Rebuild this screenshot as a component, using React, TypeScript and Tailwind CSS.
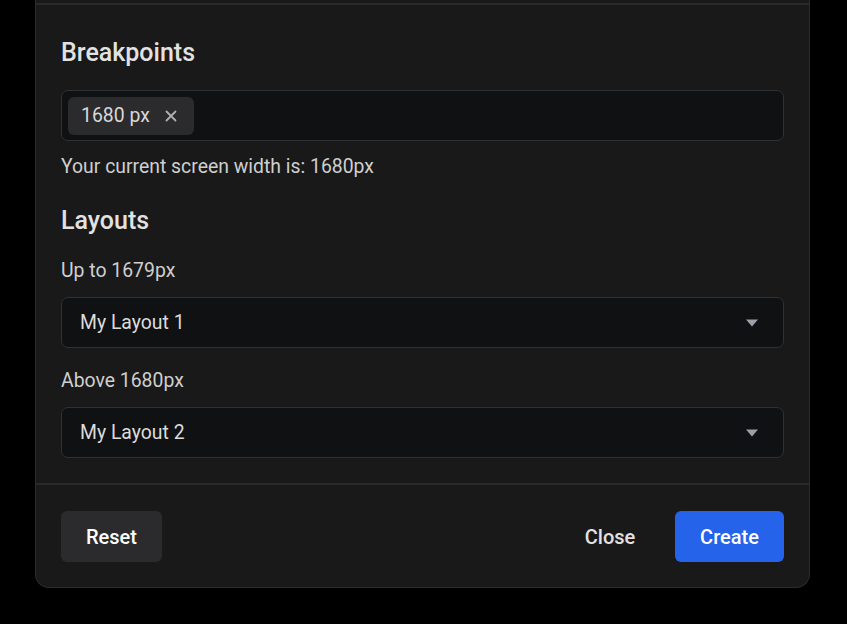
import React from 'react';

const Caret = () => (
  <svg width="14" height="8" viewBox="0 0 14 8" className="shrink-0">
    <path d="M1 0.5h12L7 7.5z" fill="#9ca0a8" />
  </svg>
);

const SelectBox = ({ value }: { value: string }) => (
  <div className="flex items-center justify-between h-[51px] rounded-[7px] border border-[#2f3133] bg-[#0f1113] pl-[18px] pr-[24px]">
    <span className="text-[19.4px] text-[#dcdcdc]">{value}</span>
    <Caret />
  </div>
);

const App = () => {
  return (
    <div className="min-h-[624px] w-full bg-black font-['Roboto',sans-serif]">
      <div className="mx-[35px] w-[775px] rounded-b-[14px] border-x border-b border-[#2c2c2c] bg-[#191919]">
        {/* header of the dialog, cut off at the top */}
        <div className="h-[5px] border-b-2 border-[#2a2a2a]" />

        <div className="px-[25px] pt-[32px] pb-[25px]">
          <h2 className="text-[25px] leading-[32px] font-medium text-[#e2e2e2]">Breakpoints</h2>

          <div className="mt-[21px] flex items-center h-[51px] rounded-[7px] border border-[#2f3133] bg-[#0f1113] px-[6px]">
            <span className="flex items-center gap-[15px] h-[38px] rounded-[6px] bg-[#2b2b2d] pl-[13px] pr-[17px]">
              <span className="text-[19.4px] text-[#d8d8d8]">1680 px</span>
              <svg width="12" height="12" viewBox="0 0 12 12">
                <path d="M1.5 1.5l9 9M10.5 1.5l-9 9" stroke="#b0b0b0" strokeWidth="1.8" strokeLinecap="round" />
              </svg>
            </span>
          </div>

          <p className="mt-[12px] text-[19.4px] leading-[28px] text-[#cfcfcf]">
            Your current screen width is: 1680px
          </p>

          <h2 className="mt-[24px] text-[25px] leading-[32px] font-medium text-[#e2e2e2]">Layouts</h2>

          <p className="mt-[20px] text-[19.4px] leading-[28px] text-[#cfcfcf]">Up to 1679px</p>
          <div className="mt-[12px]">
            <SelectBox value="My Layout 1" />
          </div>

          <p className="mt-[19px] text-[19.4px] leading-[28px] text-[#cfcfcf]">Above 1680px</p>
          <div className="mt-[12px]">
            <SelectBox value="My Layout 2" />
          </div>
        </div>

        <div className="flex items-center justify-between border-t-2 border-[#2a2a2a] px-[25px] pt-[26px] pb-[25px]">
          <button className="h-[51px] w-[101px] rounded-[6px] bg-[#2b2b2d] text-[20px] font-medium text-white">
            Reset
          </button>
          <div className="flex items-center gap-[20px]">
            <button className="h-[51px] w-[90px] text-[20px] font-medium text-[#e2e2e2]">Close</button>
            <button className="h-[51px] w-[109px] rounded-[6px] bg-[#2563eb] text-[20px] font-medium text-white">
              Create
            </button>
          </div>
        </div>
      </div>
    </div>
  );
};

export default App;
